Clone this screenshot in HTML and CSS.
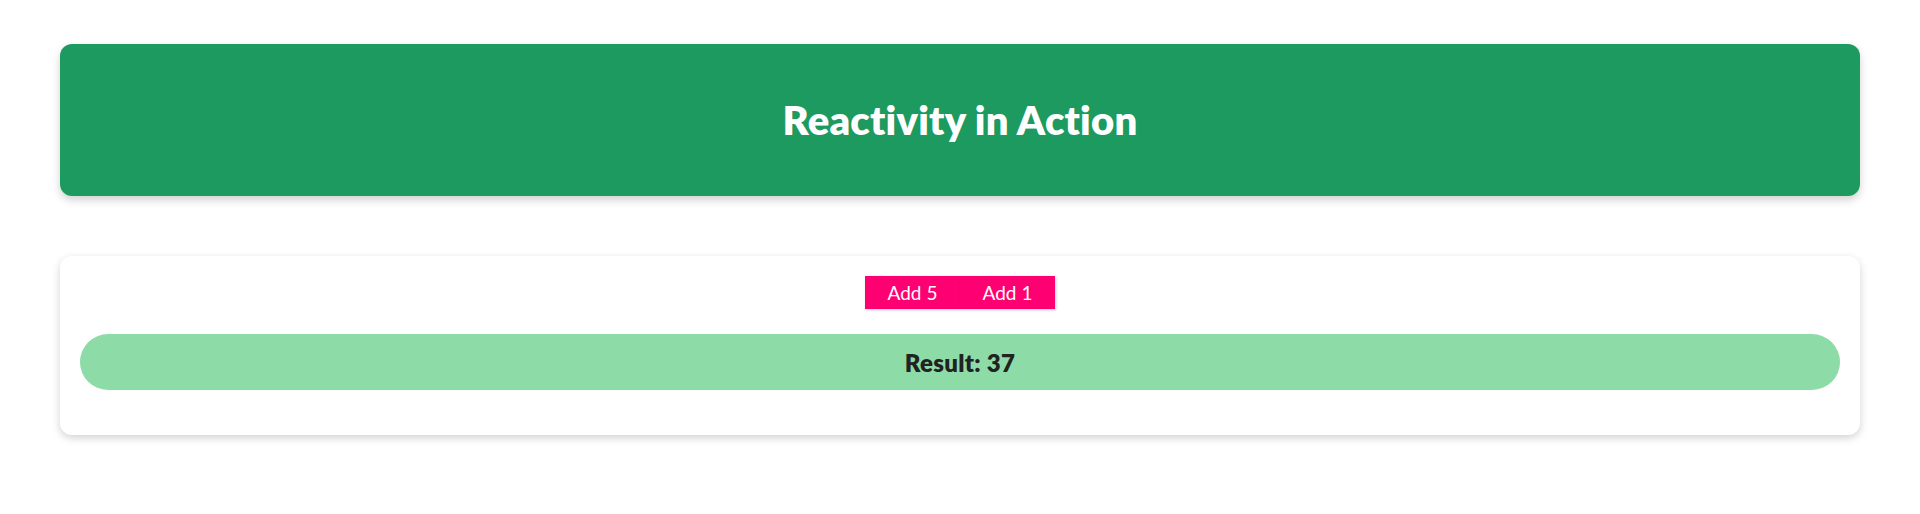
FILE: index.html
```html
<!DOCTYPE html>
<html>
<head>
<meta charset="utf-8">
<link rel="stylesheet" href="styles.css">
</head>
<body>
<div class="page">
  <header class="hero"><h1 class="title">Reactivity in Action</h1></header>
  <section class="card">
    <div class="buttons">
      <button class="btn">Add 5</button>
      <button class="btn">Add 1</button>
    </div>
    <div class="result">Result: 37</div>
  </section>
</div>
</body>
</html>
```
FILE: styles.css
```css
html, body { margin: 0; padding: 0; background: #fff; }
body { font-family: "Lato", "Open Sans", sans-serif; }
.page { padding: 44px 60px; display: flex; flex-direction: column; gap: 60px; }
.hero {
  height: 152px; background: #1d9a60; border-radius: 12px;
  box-shadow: 0 4px 8px rgba(0,0,0,0.18);
  display: flex; align-items: center; justify-content: center;
}
.title { margin: 0; color: #fff; font-size: 40px; font-weight: 800; letter-spacing: 0.2px; }
.card {
  background: #fff; border-radius: 12px;
  box-shadow: 0 3px 8px rgba(0,0,0,0.18);
  padding: 20px 20px 45px;
  display: flex; flex-direction: column; gap: 25px;
}
.buttons { display: flex; justify-content: center; }
.btn {
  width: 95px; height: 33px; border: 0; margin: 0; padding: 0;
  background: #ff0073; color: #fff; font-family: inherit; font-size: 19px;
  box-shadow: 1px 1px 3px rgba(0,0,0,0.2);
}
.result {
  height: 56px; border-radius: 28px; background: #8ddba6;
  display: flex; align-items: center; justify-content: center;
  font-size: 24px; font-weight: 800; color: #222; letter-spacing: 0.3px;
}
```
